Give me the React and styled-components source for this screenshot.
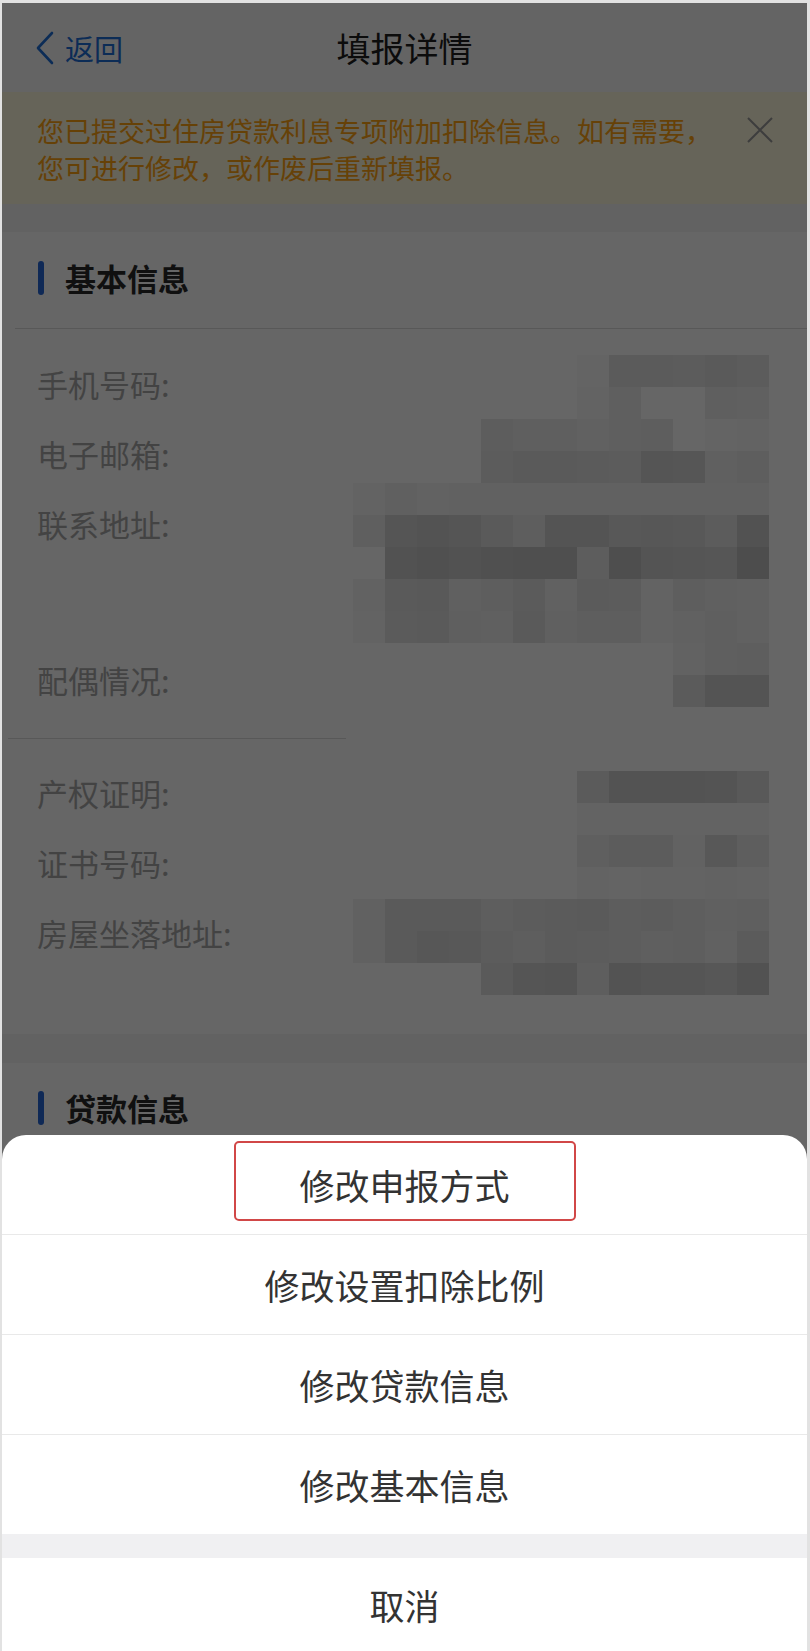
import React from 'react';
import styled, { createGlobalStyle } from 'styled-components';

const GlobalStyle = createGlobalStyle`
  html, body {
    margin: 0;
    padding: 0;
  }
  body {
    background: #e2e2e2;
    font-family: "Noto Sans CJK SC", "Noto Sans", sans-serif;
  }
  #root {
    padding: 3px 3px 0 2px;
  }
`;

const Screen = styled.div`
  position: relative;
  display: flex;
  flex-direction: column;
  height: 1648px;
  overflow: hidden;
  background: #f4f4f5;
`;

const NavBar = styled.header`
  display: grid;
  grid-template-columns: 1fr auto 1fr;
  align-items: center;
  height: 89px;
  background: #fbfbfb;
`;

const BackLink = styled.a`
  display: flex;
  align-items: center;
  gap: 10px;
  padding-left: 33px;
  color: #1f6fd8;
  font-size: 29px;
  text-decoration: none;
`;

const NavTitle = styled.h1`
  margin: 0;
  font-size: 34px;
  font-weight: 400;
  color: #1e1e1e;
`;

const Notice = styled.div`
  display: flex;
  align-items: flex-start;
  padding: 20px 33px 18px 35px;
  background: #fff9de;
`;

const NoticeText = styled.p`
  margin: 0;
  max-width: 690px;
  font-size: 27px;
  line-height: 37px;
  color: #ffa412;
`;

const CloseButton = styled.button`
  margin: 4px 0 0 auto;
  padding: 0;
  border: none;
  background: none;
  color: #9a9a9a;
  line-height: 0;
`;

const Card = styled.section`
  margin-top: ${({ $gap }) => $gap}px;
  background: #fff;
  ${({ $grow }) => ($grow ? 'flex: 1;' : '')}
`;

const SectionHead = styled.div`
  display: flex;
  align-items: center;
  gap: 21px;
  padding: ${({ $top }) => $top}px 36px 32px;
`;

const Accent = styled.span`
  width: 6px;
  height: 34px;
  border-radius: 3px;
  background: #2667d6;
`;

const SectionTitle = styled.h2`
  margin: 0;
  font-size: 31px;
  line-height: 36px;
  font-weight: 700;
  color: #2a2a2a;
`;

const Divider = styled.hr`
  margin: 0 0 0 ${({ $inset }) => $inset}px;
  width: ${({ $width }) => ($width ? `${$width}px` : 'auto')};
  height: 1px;
  border: none;
  background: #dcdcdc;
`;

const InfoBlock = styled.div`
  display: flex;
  align-items: flex-start;
  padding: ${({ $pad }) => $pad};
`;

const Labels = styled.div`
  flex: 1;
  display: flex;
  flex-direction: column;
`;

const Label = styled.div`
  height: ${({ $h }) => $h || 70}px;
  font-size: 31px;
  line-height: 70px;
  color: #a9a9a9;
`;

const Mosaic = styled.div`
  display: grid;
  grid-template-columns: repeat(13, 32px);
  grid-auto-rows: 32px;
  margin-top: ${({ $offset }) => $offset}px;
  filter: blur(0.6px);
`;

const Cell = styled.span`
  background: ${({ $shade }) => ($shade ? `rgb(${$shade},${$shade},${$shade})` : 'transparent')};
`;

const Backdrop = styled.div`
  position: absolute;
  inset: 0;
  background: rgba(0, 0, 0, 0.6);
`;

const Sheet = styled.div`
  position: absolute;
  left: 0;
  right: 0;
  bottom: 0;
  overflow: hidden;
  border-radius: 24px 24px 0 0;
  background: #fff;
`;

const SheetItem = styled.div`
  display: flex;
  align-items: center;
  justify-content: center;
  height: ${({ $h }) => $h || 99}px;
  font-size: 35px;
  color: #333;

  & + & {
    border-top: 1px solid #e9e9e9;
  }
`;

const Marked = styled.span`
  box-sizing: border-box;
  display: flex;
  align-items: center;
  justify-content: center;
  width: 342px;
  height: 80px;
  padding-top: 6px;
  margin-bottom: 7px;
  border: 2px solid #d14747;
  border-radius: 5px;
`;

const SheetGap = styled.div`
  height: 24px;
  background: #f0f0f2;
`;

const basicMosaic = [
  [0, 0, 0, 0, 0, 0, 0, 250, 228, 228, 230, 225, 230],
  [0, 0, 0, 0, 0, 0, 0, 248, 238, 255, 255, 238, 240],
  [0, 0, 0, 0, 233, 238, 238, 243, 238, 236, 255, 250, 248],
  [0, 0, 0, 0, 230, 225, 225, 228, 230, 213, 215, 240, 235],
  [248, 240, 245, 243, 243, 242, 243, 243, 243, 243, 243, 243, 243],
  [238, 213, 208, 213, 225, 235, 210, 210, 220, 218, 220, 230, 205],
  [0, 205, 200, 205, 200, 198, 198, 233, 195, 210, 213, 215, 193],
  [245, 225, 223, 240, 235, 228, 243, 228, 230, 248, 235, 240, 243],
  [248, 228, 225, 238, 240, 225, 240, 235, 235, 248, 243, 238, 243],
  [0, 0, 0, 0, 0, 0, 0, 0, 0, 0, 245, 238, 235],
  [0, 0, 0, 0, 0, 0, 0, 0, 0, 0, 228, 210, 210],
];

const houseMosaic = [
  [0, 0, 0, 0, 0, 0, 0, 228, 208, 208, 208, 210, 223],
  [0, 0, 0, 0, 0, 0, 0, 248, 248, 248, 248, 248, 248],
  [0, 0, 0, 0, 0, 0, 0, 238, 230, 230, 245, 220, 235],
  [0, 0, 0, 0, 0, 0, 0, 248, 250, 248, 248, 245, 248],
  [243, 225, 225, 225, 235, 230, 228, 225, 233, 230, 235, 240, 238],
  [243, 225, 218, 220, 230, 235, 228, 230, 233, 238, 235, 243, 228],
  [0, 0, 0, 0, 225, 213, 210, 235, 208, 213, 213, 218, 205],
];

const basicRows = [
  { label: '手机号码:' },
  { label: '电子邮箱:' },
  { label: '联系地址:', h: 156 },
  { label: '配偶情况:' },
];

const houseRows = [{ label: '产权证明:' }, { label: '证书号码:' }, { label: '房屋坐落地址:' }];

const actions = ['修改申报方式', '修改设置扣除比例', '修改贷款信息', '修改基本信息'];

function Pixelated({ rows, offset }) {
  return (
    <Mosaic $offset={offset}>
      {rows.flatMap((row, r) => row.map((shade, c) => <Cell key={`${r}-${c}`} $shade={shade} />))}
    </Mosaic>
  );
}

export default function App() {
  return (
    <>
      <GlobalStyle />
      <Screen>
        <NavBar>
          <BackLink href="#">
            <svg width="20" height="34" viewBox="0 0 20 34" fill="none">
              <path d="M17 2L3 17l14 15" stroke="currentColor" strokeWidth="2.6" strokeLinecap="round" strokeLinejoin="round" />
            </svg>
            返回
          </BackLink>
          <NavTitle>填报详情</NavTitle>
          <span />
        </NavBar>

        <Notice>
          <NoticeText>您已提交过住房贷款利息专项附加扣除信息。如有需要，您可进行修改，或作废后重新填报。</NoticeText>
          <CloseButton aria-label="关闭">
            <svg width="28" height="28" viewBox="0 0 28 28">
              <path d="M2 2l24 24M26 2L2 26" stroke="currentColor" strokeWidth="2" />
            </svg>
          </CloseButton>
        </Notice>

        <Card $gap={28}>
          <SectionHead $top={28}>
            <Accent />
            <SectionTitle>基本信息</SectionTitle>
          </SectionHead>
          <Divider $inset={13} />
          <InfoBlock $pad="20px 38px 23px 35px">
            <Labels>
              {basicRows.map((row) => (
                <Label key={row.label} $h={row.h}>{row.label}</Label>
              ))}
            </Labels>
            <Pixelated rows={basicMosaic} offset={6} />
          </InfoBlock>
          <Divider $inset={6} $width={338} />
          <InfoBlock $pad="19px 38px 39px 35px">
            <Labels>
              {houseRows.map((row) => (
                <Label key={row.label}>{row.label}</Label>
              ))}
            </Labels>
            <Pixelated rows={houseMosaic} offset={13} />
          </InfoBlock>
        </Card>

        <Card $gap={29} $grow>
          <SectionHead $top={27}>
            <Accent />
            <SectionTitle>贷款信息</SectionTitle>
          </SectionHead>
        </Card>

        <Backdrop />

        <Sheet>
          {actions.map((text, i) => (
            <SheetItem key={text}>{i === 0 ? <Marked>{text}</Marked> : text}</SheetItem>
          ))}
          <SheetGap />
          <SheetItem $h={93}>取消</SheetItem>
        </Sheet>
      </Screen>
    </>
  );
}
